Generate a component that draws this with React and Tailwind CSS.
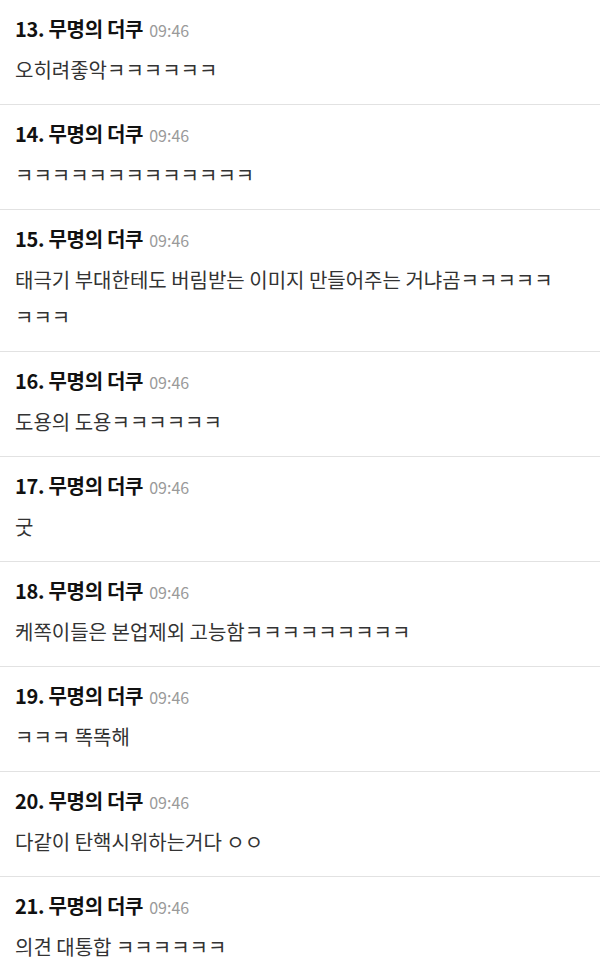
import React from 'react';

const comments = [
  { no: 13, text: '오히려좋악ㅋㅋㅋㅋㅋㅋ' },
  { no: 14, text: 'ㅋㅋㅋㅋㅋㅋㅋㅋㅋㅋㅋㅋㅋ' },
  { no: 15, text: '태극기 부대한테도 버림받는 이미지 만들어주는 거냐곰ㅋㅋㅋㅋㅋㅋㅋㅋ' },
  { no: 16, text: '도용의 도용ㅋㅋㅋㅋㅋㅋ' },
  { no: 17, text: '굿' },
  { no: 18, text: '케쪽이들은 본업제외 고능함ㅋㅋㅋㅋㅋㅋㅋㅋㅋ' },
  { no: 19, text: 'ㅋㅋㅋ 똑똑해' },
  { no: 20, text: '다같이 탄핵시위하는거다 ㅇㅇ' },
  { no: 21, text: '의견 대통합 ㅋㅋㅋㅋㅋㅋ' },
];

const font = { fontFamily: '"Noto Sans CJK KR", "Noto Sans", sans-serif' };

const Comment = ({ no, text }) => (
  <div className="border-b border-[#e2e2e2] pl-[15px] pr-[35px] pt-[15px] pb-[16px]">
    <div className="h-[28px] leading-[28px] whitespace-nowrap">
      <span className="text-[20px] font-bold text-[#111] tracking-[-0.3px]">
        {no}. 무명의 더쿠
      </span>
      <span className="ml-[6px] text-[16px] text-[#9a9a9a]">09:46</span>
    </div>
    <p className="mt-[8px] text-[20px] leading-[37px] text-[#333]">{text}</p>
  </div>
);

export default function App() {
  return (
    <div className="w-[600px] min-h-[980px] bg-white" style={font}>
      {comments.map((c) => (
        <Comment key={c.no} {...c} />
      ))}
    </div>
  );
}
